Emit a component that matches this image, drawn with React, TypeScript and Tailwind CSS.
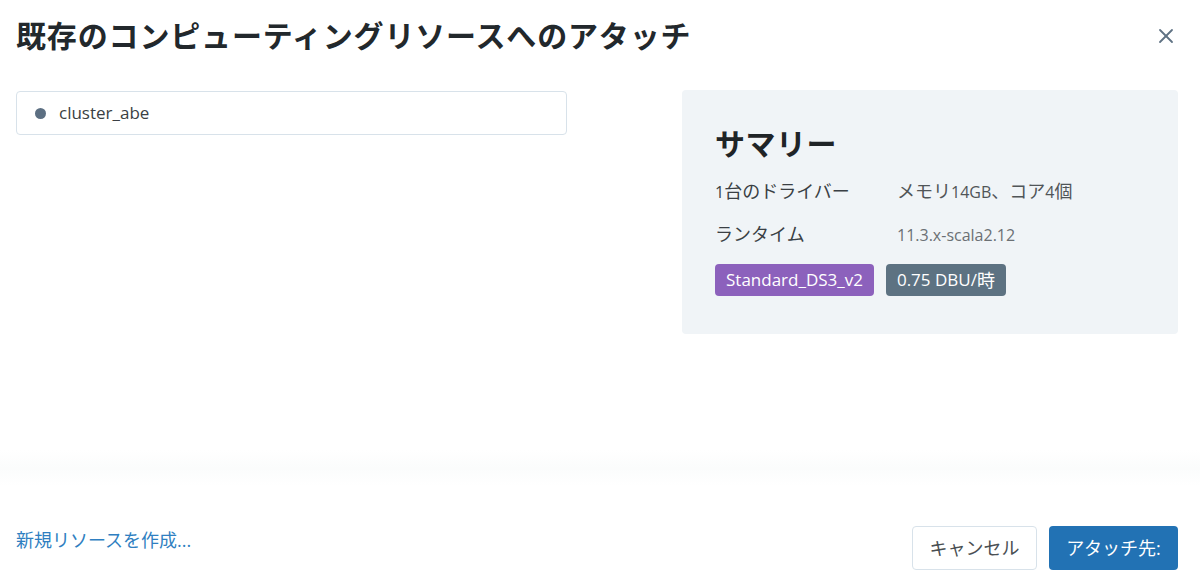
import React from "react";
import { X } from "lucide-react";

const font = "font-['Open_Sans','Noto_Sans_CJK_JP',sans-serif]";

// Japanese glyphs in the reference run wider than the Latin ones
const Jp = ({ children }: { children: React.ReactNode }) => (
  <span className="text-[18px]">{children}</span>
);

const App = () => {
  return (
    <div className={`w-[1200px] h-[581px] bg-white flex flex-col text-[#2e3438] ${font}`}>
      {/* Header */}
      <div className="flex items-center justify-between pl-4 pr-[22px] pt-[17px]">
        <h1 className="text-[30px] leading-[38px] font-bold text-[#22282c] tracking-[0.85px]">
          既存のコンピューティングリソースへのアタッチ
        </h1>
        <button className="w-6 h-6 flex items-center justify-center text-[#5f7284]">
          <X className="w-6 h-6" strokeWidth={1.8} />
        </button>
      </div>

      {/* Body */}
      <div className="flex justify-between pl-4 pr-[22px] mt-[35px]">
        <div className="w-[551px] h-[44px] mt-px border border-[#d8e2ea] rounded-[4px] flex items-center pl-[18px] gap-[13px]">
          <span className="w-[11px] h-[11px] rounded-full bg-[#5c6f82]" />
          <span className="text-[17px] text-[#3a3f44]">cluster_abe</span>
        </div>

        {/* Summary */}
        <div className="w-[496px] h-[244px] bg-[#f0f4f7] rounded-[4px] pl-[33px] pt-[34px]">
          <h2 className="text-[30px] leading-[40px] font-bold text-[#1f2427] tracking-[0.5px]">サマリー</h2>
          <div className="mt-[15px] flex flex-col gap-[18px] text-[16px] leading-[24px]">
            <div className="flex items-baseline">
              <span className="w-[182px] text-[#3a3f44]">
                1<Jp>台のドライバー</Jp>
              </span>
              <span className="text-[#505558]">
                <Jp>メモリ</Jp>14GB<Jp>、コア</Jp>4<Jp>個</Jp>
              </span>
            </div>
            <div className="flex items-baseline">
              <span className="w-[182px] text-[#3a3f44]">
                <Jp>ランタイム</Jp>
              </span>
              <span className="text-[#6b7074]">11.3.x-scala2.12</span>
            </div>
          </div>
          <div className="flex gap-3 mt-[17px]">
            <span className="h-8 px-[11px] flex items-center rounded-[4px] bg-[#8c61bc] text-white text-[17px]">
              Standard_DS3_v2
            </span>
            <span className="h-8 px-[11px] flex items-center rounded-[4px] bg-[#5d7282] text-white text-[17px]">
              0.75 DBU/<Jp>時</Jp>
            </span>
          </div>
        </div>
      </div>

      {/* faint scroll shade */}
      <div className="flex-1" />
      <div className="h-[36px] bg-gradient-to-b from-white via-[#fbfcfc] to-white" />
      <div className="h-[40px]" />

      {/* Footer */}
      <div className="flex items-center justify-between pl-4 pr-[22px] pb-[11px]">
        <a className="text-[18px] text-[#2f7fc1] -mt-[16px]">新規リソースを作成...</a>
        <div className="flex gap-3">
          <button className="h-[44px] w-[125px] border border-[#d8e2ea] rounded-[4px] text-[18px] text-[#4a4f53] bg-white">
            キャンセル
          </button>
          <button className="h-[44px] w-[129px] rounded-[4px] text-[18px] text-white bg-[#2272b4]">
            アタッチ先:
          </button>
        </div>
      </div>
    </div>
  );
};

export default App;
